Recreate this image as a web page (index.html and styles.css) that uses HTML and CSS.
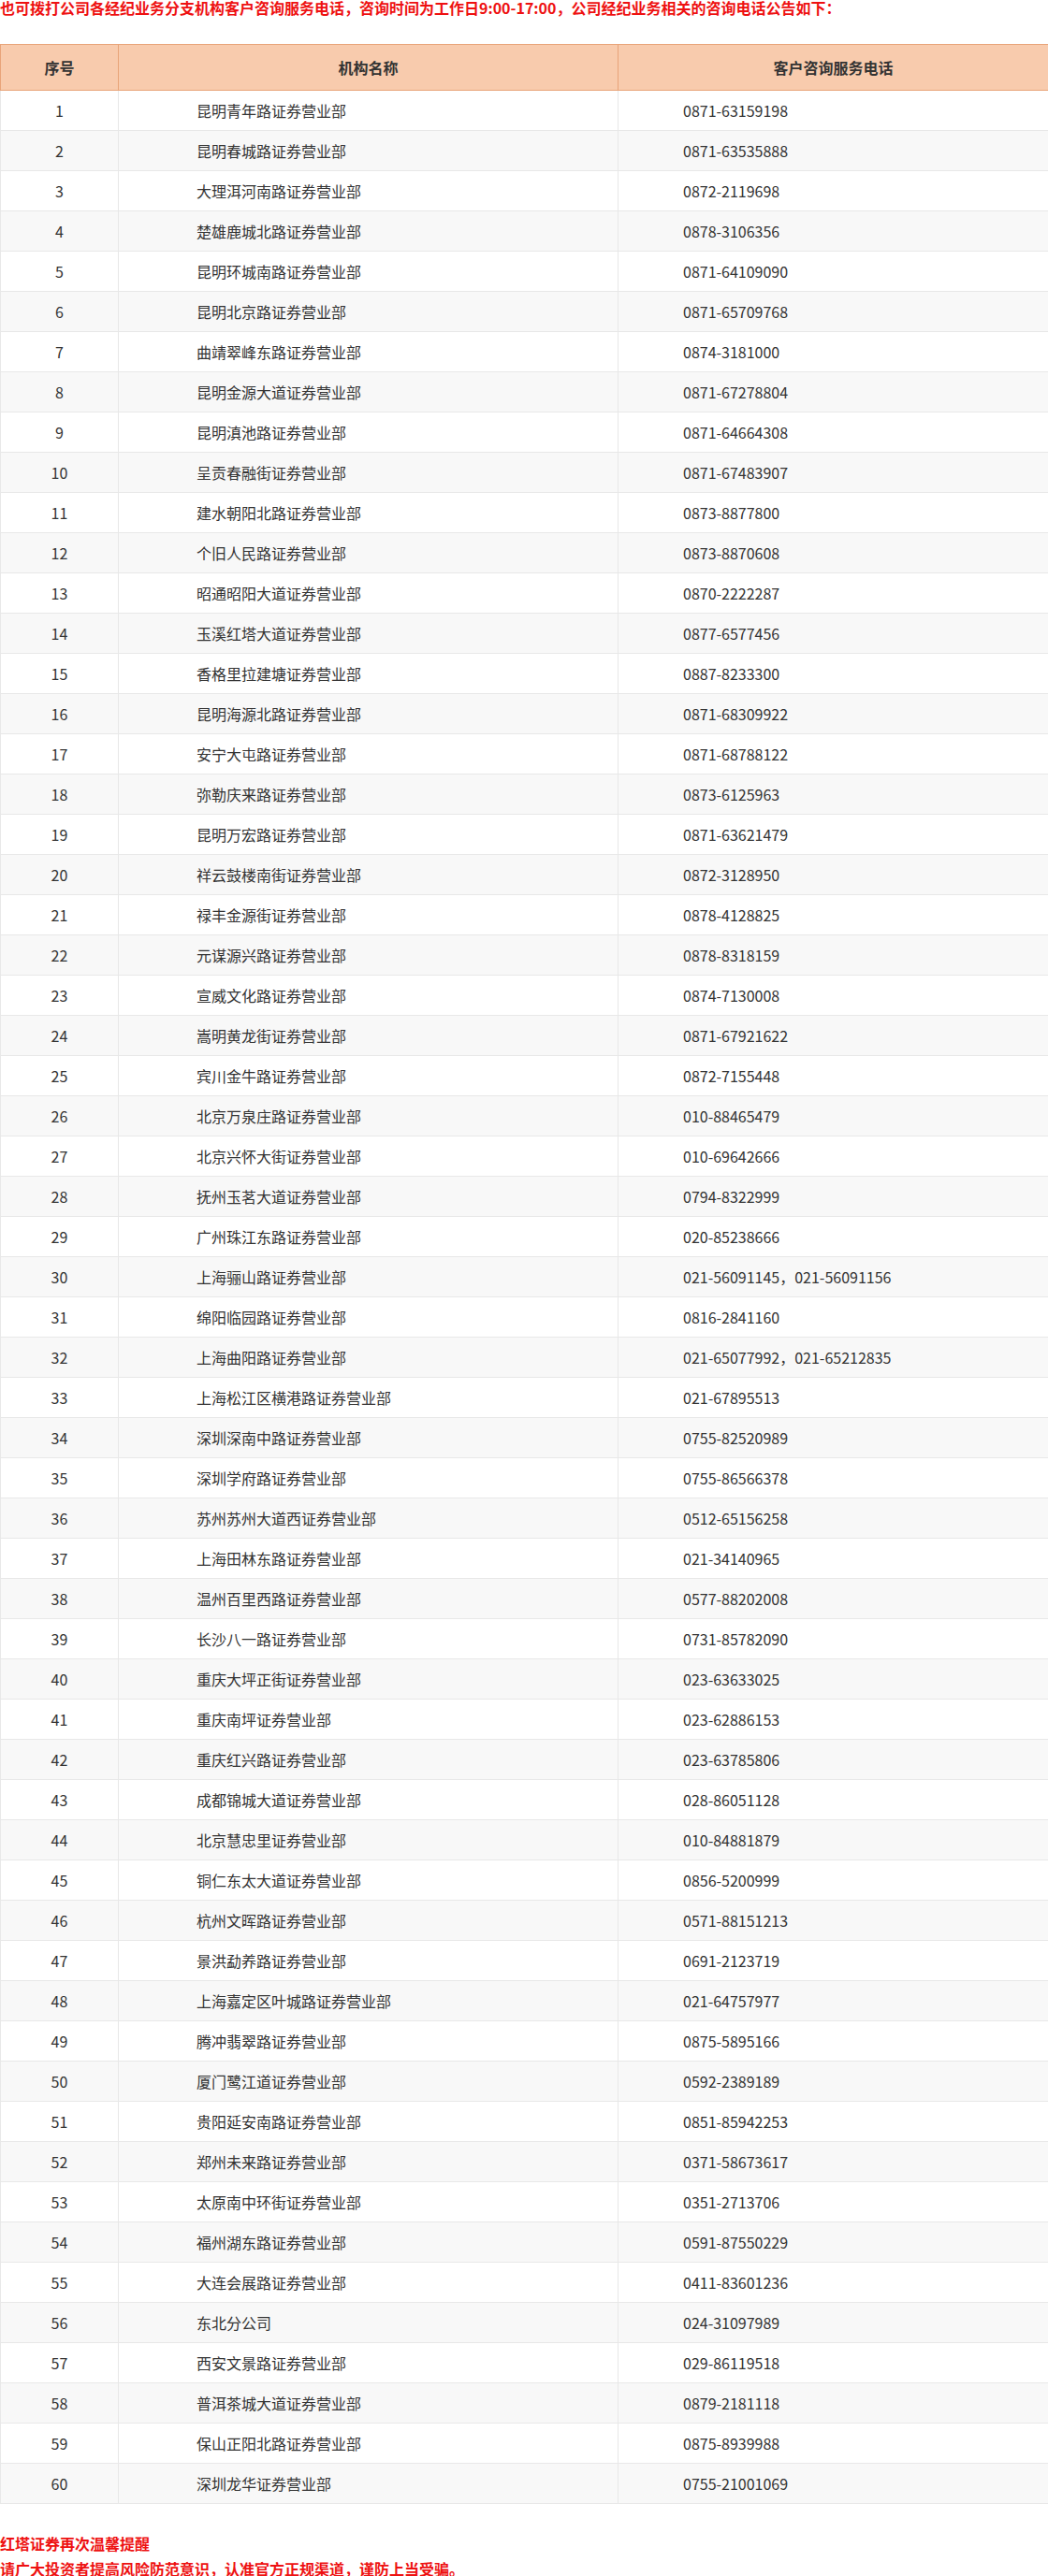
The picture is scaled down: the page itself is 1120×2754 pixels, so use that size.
FILE: index.html
```html
<!DOCTYPE html>
<html lang="zh-CN">
<head>
<meta charset="utf-8">
<title>客户咨询服务电话</title>
<link rel="stylesheet" href="styles.css">
</head>
<body>
<p class="notice">也可拨打公司各经纪业务分支机构客户咨询服务电话，咨询时间为工作日9:00-17:00，公司经纪业务相关的咨询电话公告如下：</p>
<table class="branches">
  <colgroup><col class="c-no"><col class="c-name"><col class="c-tel"></colgroup>
  <thead>
    <tr><th>序号</th><th>机构名称</th><th>客户咨询服务电话</th></tr>
  </thead>
  <tbody>
    <tr><td class="no">1</td><td class="name">昆明青年路证券营业部</td><td class="tel">0871-63159198</td></tr>
    <tr><td class="no">2</td><td class="name">昆明春城路证券营业部</td><td class="tel">0871-63535888</td></tr>
    <tr><td class="no">3</td><td class="name">大理洱河南路证券营业部</td><td class="tel">0872-2119698</td></tr>
    <tr><td class="no">4</td><td class="name">楚雄鹿城北路证券营业部</td><td class="tel">0878-3106356</td></tr>
    <tr><td class="no">5</td><td class="name">昆明环城南路证券营业部</td><td class="tel">0871-64109090</td></tr>
    <tr><td class="no">6</td><td class="name">昆明北京路证券营业部</td><td class="tel">0871-65709768</td></tr>
    <tr><td class="no">7</td><td class="name">曲靖翠峰东路证券营业部</td><td class="tel">0874-3181000</td></tr>
    <tr><td class="no">8</td><td class="name">昆明金源大道证券营业部</td><td class="tel">0871-67278804</td></tr>
    <tr><td class="no">9</td><td class="name">昆明滇池路证券营业部</td><td class="tel">0871-64664308</td></tr>
    <tr><td class="no">10</td><td class="name">呈贡春融街证券营业部</td><td class="tel">0871-67483907</td></tr>
    <tr><td class="no">11</td><td class="name">建水朝阳北路证券营业部</td><td class="tel">0873-8877800</td></tr>
    <tr><td class="no">12</td><td class="name">个旧人民路证券营业部</td><td class="tel">0873-8870608</td></tr>
    <tr><td class="no">13</td><td class="name">昭通昭阳大道证券营业部</td><td class="tel">0870-2222287</td></tr>
    <tr><td class="no">14</td><td class="name">玉溪红塔大道证券营业部</td><td class="tel">0877-6577456</td></tr>
    <tr><td class="no">15</td><td class="name">香格里拉建塘证券营业部</td><td class="tel">0887-8233300</td></tr>
    <tr><td class="no">16</td><td class="name">昆明海源北路证券营业部</td><td class="tel">0871-68309922</td></tr>
    <tr><td class="no">17</td><td class="name">安宁大屯路证券营业部</td><td class="tel">0871-68788122</td></tr>
    <tr><td class="no">18</td><td class="name">弥勒庆来路证券营业部</td><td class="tel">0873-6125963</td></tr>
    <tr><td class="no">19</td><td class="name">昆明万宏路证券营业部</td><td class="tel">0871-63621479</td></tr>
    <tr><td class="no">20</td><td class="name">祥云鼓楼南街证券营业部</td><td class="tel">0872-3128950</td></tr>
    <tr><td class="no">21</td><td class="name">禄丰金源街证券营业部</td><td class="tel">0878-4128825</td></tr>
    <tr><td class="no">22</td><td class="name">元谋源兴路证券营业部</td><td class="tel">0878-8318159</td></tr>
    <tr><td class="no">23</td><td class="name">宣威文化路证券营业部</td><td class="tel">0874-7130008</td></tr>
    <tr><td class="no">24</td><td class="name">嵩明黄龙街证券营业部</td><td class="tel">0871-67921622</td></tr>
    <tr><td class="no">25</td><td class="name">宾川金牛路证券营业部</td><td class="tel">0872-7155448</td></tr>
    <tr><td class="no">26</td><td class="name">北京万泉庄路证券营业部</td><td class="tel">010-88465479</td></tr>
    <tr><td class="no">27</td><td class="name">北京兴怀大街证券营业部</td><td class="tel">010-69642666</td></tr>
    <tr><td class="no">28</td><td class="name">抚州玉茗大道证券营业部</td><td class="tel">0794-8322999</td></tr>
    <tr><td class="no">29</td><td class="name">广州珠江东路证券营业部</td><td class="tel">020-85238666</td></tr>
    <tr><td class="no">30</td><td class="name">上海骊山路证券营业部</td><td class="tel">021-56091145，021-56091156</td></tr>
    <tr><td class="no">31</td><td class="name">绵阳临园路证券营业部</td><td class="tel">0816-2841160</td></tr>
    <tr><td class="no">32</td><td class="name">上海曲阳路证券营业部</td><td class="tel">021-65077992，021-65212835</td></tr>
    <tr><td class="no">33</td><td class="name">上海松江区横港路证券营业部</td><td class="tel">021-67895513</td></tr>
    <tr><td class="no">34</td><td class="name">深圳深南中路证券营业部</td><td class="tel">0755-82520989</td></tr>
    <tr><td class="no">35</td><td class="name">深圳学府路证券营业部</td><td class="tel">0755-86566378</td></tr>
    <tr><td class="no">36</td><td class="name">苏州苏州大道西证券营业部</td><td class="tel">0512-65156258</td></tr>
    <tr><td class="no">37</td><td class="name">上海田林东路证券营业部</td><td class="tel">021-34140965</td></tr>
    <tr><td class="no">38</td><td class="name">温州百里西路证券营业部</td><td class="tel">0577-88202008</td></tr>
    <tr><td class="no">39</td><td class="name">长沙八一路证券营业部</td><td class="tel">0731-85782090</td></tr>
    <tr><td class="no">40</td><td class="name">重庆大坪正街证券营业部</td><td class="tel">023-63633025</td></tr>
    <tr><td class="no">41</td><td class="name">重庆南坪证券营业部</td><td class="tel">023-62886153</td></tr>
    <tr><td class="no">42</td><td class="name">重庆红兴路证券营业部</td><td class="tel">023-63785806</td></tr>
    <tr><td class="no">43</td><td class="name">成都锦城大道证券营业部</td><td class="tel">028-86051128</td></tr>
    <tr><td class="no">44</td><td class="name">北京慧忠里证券营业部</td><td class="tel">010-84881879</td></tr>
    <tr><td class="no">45</td><td class="name">铜仁东太大道证券营业部</td><td class="tel">0856-5200999</td></tr>
    <tr><td class="no">46</td><td class="name">杭州文晖路证券营业部</td><td class="tel">0571-88151213</td></tr>
    <tr><td class="no">47</td><td class="name">景洪勐养路证券营业部</td><td class="tel">0691-2123719</td></tr>
    <tr><td class="no">48</td><td class="name">上海嘉定区叶城路证券营业部</td><td class="tel">021-64757977</td></tr>
    <tr><td class="no">49</td><td class="name">腾冲翡翠路证券营业部</td><td class="tel">0875-5895166</td></tr>
    <tr><td class="no">50</td><td class="name">厦门鹭江道证券营业部</td><td class="tel">0592-2389189</td></tr>
    <tr><td class="no">51</td><td class="name">贵阳延安南路证券营业部</td><td class="tel">0851-85942253</td></tr>
    <tr><td class="no">52</td><td class="name">郑州未来路证券营业部</td><td class="tel">0371-58673617</td></tr>
    <tr><td class="no">53</td><td class="name">太原南中环街证券营业部</td><td class="tel">0351-2713706</td></tr>
    <tr><td class="no">54</td><td class="name">福州湖东路证券营业部</td><td class="tel">0591-87550229</td></tr>
    <tr><td class="no">55</td><td class="name">大连会展路证券营业部</td><td class="tel">0411-83601236</td></tr>
    <tr><td class="no">56</td><td class="name">东北分公司</td><td class="tel">024-31097989</td></tr>
    <tr><td class="no">57</td><td class="name">西安文景路证券营业部</td><td class="tel">029-86119518</td></tr>
    <tr><td class="no">58</td><td class="name">普洱茶城大道证券营业部</td><td class="tel">0879-2181118</td></tr>
    <tr><td class="no">59</td><td class="name">保山正阳北路证券营业部</td><td class="tel">0875-8939988</td></tr>
    <tr><td class="no">60</td><td class="name">深圳龙华证券营业部</td><td class="tel">0755-21001069</td></tr>
  </tbody>
</table>
<div class="reminder">
  <p>红塔证券再次温馨提醒</p>
  <p>请广大投资者提高风险防范意识，认准官方正规渠道，谨防上当受骗。</p>
</div>
</body>
</html>
```

FILE: styles.css
```css
html, body {
  margin: 0;
  padding: 0;
  background: #ffffff;
}
body {
  font-family: "Noto Sans CJK SC", "Noto Sans", sans-serif;
  color: #333333;
  width: 1120px;
}
.notice {
  margin: 0;
  font-size: 16px;
  line-height: 16px;
  font-weight: bold;
  color: #ee1111;
  white-space: nowrap;
}
.branches {
  margin-top: 31px;
  width: 1120px;
  border-collapse: collapse;
  table-layout: fixed;
  font-size: 16px;
}
.c-no { width: 126px; }
.c-name { width: 534px; }
.c-tel { width: 460px; }
.branches th {
  height: 48px;
  padding: 0;
  background: #f8cbad;
  border: 1px solid #e8a479;
  font-weight: bold;
  color: #333333;
  text-align: center;
}
.branches td {
  height: 42px;
  padding: 0;
  border: 1px solid #e8e8e8;
  color: #333333;
  white-space: nowrap;
}
.branches tbody tr:nth-child(even) td {
  background: #f8f8f8;
}
.branches td.no { text-align: center; }
.branches td.name { padding-left: 83px; }
.branches td.tel { padding-left: 69px; }
.reminder {
  margin-top: 29px;
  font-size: 16px;
  line-height: 27px;
  font-weight: bold;
  color: #ee1111;
}
.reminder p { margin: 0; }
```
